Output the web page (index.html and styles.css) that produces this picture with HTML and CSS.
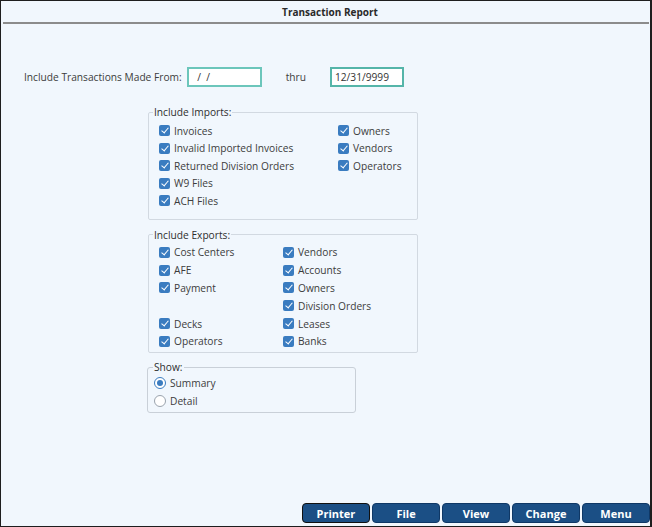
FILE: index.html
```html
<!DOCTYPE html>
<html>
<head>
<meta charset="utf-8">
<link rel="stylesheet" href="styles.css">
</head>
<body>
<div class="window">
  <header class="title">Transaction Report</header>
  <main class="content">
    <div class="daterow">
      <span class="label">Include Transactions Made From:</span>
      <span class="input from">&nbsp;/&nbsp;&nbsp;/</span>
      <span class="thru">thru</span>
      <span class="input to">12/31/9999</span>
    </div>

    <fieldset class="group imports">
      <legend>Include Imports:</legend>
      <div class="grid">
        <label class="cb"><span class="box"></span>Invoices</label>
        <label class="cb"><span class="box"></span>Owners</label>
        <label class="cb"><span class="box"></span>Invalid Imported Invoices</label>
        <label class="cb"><span class="box"></span>Vendors</label>
        <label class="cb"><span class="box"></span>Returned Division Orders</label>
        <label class="cb"><span class="box"></span>Operators</label>
        <label class="cb"><span class="box"></span>W9 Files</label>
        <span></span>
        <label class="cb"><span class="box"></span>ACH Files</label>
        <span></span>
      </div>
    </fieldset>

    <fieldset class="group exports">
      <legend>Include Exports:</legend>
      <div class="grid">
        <label class="cb"><span class="box"></span>Cost Centers</label>
        <label class="cb"><span class="box"></span>Vendors</label>
        <label class="cb"><span class="box"></span>AFE</label>
        <label class="cb"><span class="box"></span>Accounts</label>
        <label class="cb"><span class="box"></span>Payment</label>
        <label class="cb"><span class="box"></span>Owners</label>
        <span></span>
        <label class="cb"><span class="box"></span>Division Orders</label>
        <label class="cb"><span class="box"></span>Decks</label>
        <label class="cb"><span class="box"></span>Leases</label>
        <label class="cb"><span class="box"></span>Operators</label>
        <label class="cb"><span class="box"></span>Banks</label>
      </div>
    </fieldset>

    <fieldset class="group show">
      <legend>Show:</legend>
      <div class="radios">
        <label class="rb"><span class="dot on"></span>Summary</label>
        <label class="rb"><span class="dot"></span>Detail</label>
      </div>
    </fieldset>
  </main>
  <footer class="buttons">
    <button class="btn active">Printer</button>
    <button class="btn">File</button>
    <button class="btn">View</button>
    <button class="btn">Change</button>
    <button class="btn">Menu</button>
  </footer>
</div>
</body>
</html>
```
FILE: styles.css
```css
html, body {
  margin: 0;
  padding: 0;
  background: #f1f7fd;
}
.window {
  width: 652px;
  height: 527px;
  box-sizing: border-box;
  border: 1px solid #1e1e1e;
  border-right-width: 2px;
  background: #f1f7fd;
  display: flex;
  flex-direction: column;
  font-family: "Open Sans", "Noto Sans", sans-serif;
  font-size: 10.2px;
  color: #3c3c3c;
}
.title {
  height: 21px;
  margin: 0 1px 0 2px;
  border-bottom: 2px solid #8c8c8c;
  text-align: center;
  font-weight: bold;
  font-size: 10px;
  line-height: 22px;
  color: #2a2a2a;
  padding-left: 8px;
}
.content {
  flex: 1;
  display: flex;
  flex-direction: column;
  align-items: flex-start;
}
.daterow {
  display: flex;
  align-items: center;
  margin: 43px 0 0 23px;
  height: 20px;
}
.label { margin-right: 5px; }
.input {
  box-sizing: border-box;
  height: 20px;
  border: 2px solid #6cc6bb;
  background: #fff;
  line-height: 16px;
  padding-left: 3px;
  color: #333;
}
.from { width: 75px; padding-left: 6px; }
.thru { margin: 0 24px 0 24px; }
.to { width: 74px; border-color: #55b5a9; }

.group {
  margin: 0;
  border: 1px solid #d2d9e1;
  border-radius: 2px;
  min-width: 0;
  box-sizing: border-box;
}
.group legend {
  padding: 0 1px;
  margin-left: -6px;
  line-height: 14px;
  color: #2e2e2e;
}
.imports {
  margin: 18px 0 0 147px;
  width: 270px;
  padding: 3px 0 9px 10px;
}
.imports .grid {
  display: grid;
  grid-template-columns: 179px auto;
  grid-auto-rows: 17.5px;
}
.exports {
  margin: 8px 0 0 147px;
  width: 270px;
  padding: 2px 0 2px 10px;
}
.exports .grid {
  display: grid;
  grid-template-columns: 124px auto;
  grid-auto-rows: 17.8px;
}
.cb, .rb {
  display: flex;
  align-items: center;
  white-space: nowrap;
}
.box {
  width: 11px;
  height: 11px;
  border-radius: 2px;
  background: #3a7cc0;
  margin-right: 4px;
  position: relative;
  flex: none;
}
.box::after {
  content: "";
  position: absolute;
  left: 3.5px;
  top: 1px;
  width: 3px;
  height: 6px;
  border: solid #fff;
  border-width: 0 1.6px 1.6px 0;
  transform: rotate(40deg);
}
.show {
  margin: 7px 0 0 146px;
  width: 209px;
  padding: 0 0 2px 6px;
  border-color: #c9d0d8;
  border-radius: 3px;
}
.show legend {
  margin-left: -1px;
}
.radios {
  display: grid;
  grid-auto-rows: 18px;
}
.dot {
  width: 10px;
  height: 10px;
  border-radius: 50%;
  border: 1px solid #9aa3ad;
  background: #fff;
  margin-right: 4px;
  box-sizing: content-box;
  position: relative;
  flex: none;
}
.dot.on {
  border-color: #3a7cc0;
}
.dot.on::after {
  content: "";
  position: absolute;
  left: 2px;
  top: 2px;
  width: 6px;
  height: 6px;
  border-radius: 50%;
  background: #3a7cc0;
}
.buttons {
  display: flex;
  justify-content: flex-end;
  gap: 2px;
  padding: 0 0 3px 0;
}
.btn {
  width: 68px;
  height: 20px;
  border: 1px solid #0f3866;
  border-radius: 4px;
  background: #1b4f85;
  color: #fff;
  font-family: "Open Sans", "Noto Sans", sans-serif;
  font-weight: bold;
  font-size: 11px;
  padding: 0;
}
.btn.active {
  border-color: #111;
}
```
